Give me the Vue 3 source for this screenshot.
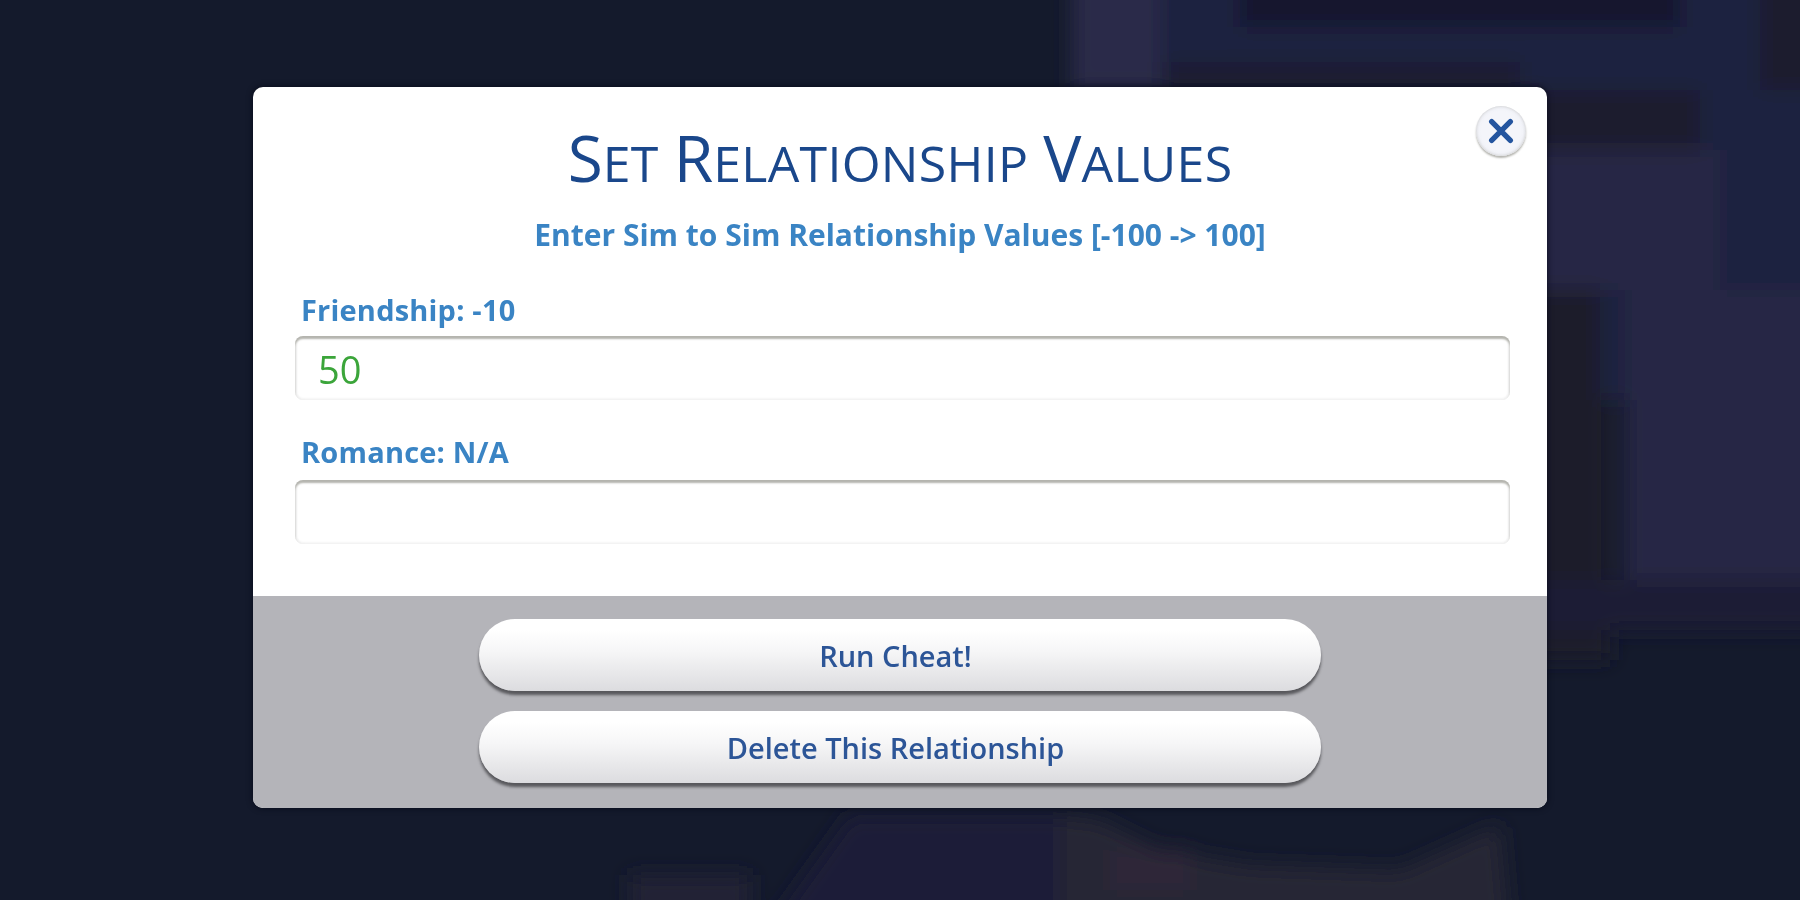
<script setup>
const titulo = [
  ["S", "ET"],
  ["R", "ELATIONSHIP"],
  ["V", "ALUES"],
];
const campos = [
  { rotulo: "Friendship: -10", valor: "50" },
  { rotulo: "Romance: N/A", valor: "" },
];
const botoes = ["Run Cheat!", "Delete This Relationship"];
</script>

<template>
  <div class="cena">
    <svg class="fundo" viewBox="0 0 1800 900" aria-hidden="true">
      <defs>
        <filter id="desfoque" x="-5%" y="-5%" width="110%" height="110%"><feGaussianBlur stdDeviation="10" /></filter>
      </defs>
      <g filter="url(#desfoque)">
        <rect x="1072" y="-40" width="88" height="130" fill="#2a2b48" />
        <rect x="1160" y="-40" width="680" height="130" fill="#1b2140" />
        <rect x="1240" y="-40" width="440" height="67" fill="#14142f" />
        <rect x="1165" y="62" width="355" height="30" fill="#1b1b30" />
        <rect x="1760" y="-40" width="80" height="130" fill="#1c1d2e" />
        <rect x="1530" y="90" width="190" height="60" fill="#1a1a2e" />
        <rect x="1700" y="90" width="140" height="240" fill="#1b2140" />
        <rect x="1530" y="150" width="190" height="140" fill="#272844" />
        <rect x="1530" y="290" width="80" height="370" fill="#1a1a2c" />
        <rect x="1600" y="290" width="30" height="110" fill="#1e2340" />
        <rect x="1625" y="290" width="215" height="290" fill="#272845" />
        <rect x="1530" y="580" width="310" height="50" fill="#1b1a36" />
        <path d="M850 940 L860 840 L900 815 L1060 815 L1100 820 L1160 850 L1250 865 L1400 870 L1500 825 L1510 940 Z" fill="#272534" />
        <path d="M760 940 L850 815 L1060 815 L1060 940 Z" fill="#1d1e38" />
        <rect x="1110" y="850" width="80" height="40" fill="#2f2538" />
        <rect x="630" y="875" width="120" height="50" fill="#232436" />
      </g>
    </svg>

    <section class="janela">
      <button class="fechar" type="button" aria-label="Fechar">
        <svg viewBox="0 0 24 24" width="32" height="32">
          <path d="M5 5 L19 19 M19 5 L5 19" />
        </svg>
      </button>

      <div class="corpo">
        <h1>
          <span class="palavra" v-for="p in titulo" :key="p[0]">{{ p[0] }}<small>{{ p[1] }}</small></span>
        </h1>
        <p class="subtitulo">Enter Sim to Sim Relationship Values [-100 -&gt; 100]</p>
        <div class="campo" v-for="c in campos" :key="c.rotulo">
          <label>{{ c.rotulo }}</label>
          <div class="entrada">{{ c.valor }}</div>
        </div>
      </div>

      <div class="rodape">
        <button class="botao" type="button" v-for="b in botoes" :key="b">{{ b }}</button>
      </div>
    </section>
  </div>
</template>

<style scoped>
.cena {
  position: relative;
  width: 1800px;
  height: 900px;
  padding: 87px 253px 0;
  box-sizing: border-box;
  background: #141a2c;
  overflow: hidden;
}

.fundo {
  position: absolute;
  inset: 0;
  width: 100%;
  height: 100%;
}

.janela {
  position: relative;
  height: 721px;
  border-radius: 10px;
  overflow: hidden;
  background: #fff;
  box-shadow: 0 0 6px rgba(5, 8, 20, 0.8);
  display: flex;
  flex-direction: column;
  font-family: "Open Sans", "Noto Sans", sans-serif;
  filter: blur(0.6px);
}

.fechar {
  position: absolute;
  top: 19px;
  right: 21px;
  width: 50px;
  height: 50px;
  padding: 0;
  border: none;
  border-radius: 50%;
  background: radial-gradient(circle, #f4f5fa 55%, #e6e8ef 100%);
  box-shadow: 0 2px 2px #b5b5b0, inset 0 0 3px #c4c4c4;
  display: flex;
  align-items: center;
  justify-content: center;
}

.fechar path {
  fill: none;
  stroke: #24559f;
  stroke-width: 4;
  stroke-linecap: round;
}

.corpo {
  height: 509px;
  padding: 0 37px 0 43px;
  box-sizing: border-box;
}

h1 {
  margin: 33px 0 0 -6px;
  font-size: 64px;
  line-height: 76px;
  font-weight: 500;
  text-align: center;
  color: #1a478b;
  display: flex;
  justify-content: center;
  gap: 15px;
}

h1 small {
  font-size: 50px;
  letter-spacing: 0.3px;
}

.subtitulo {
  margin: 17px 0 42px -6px;
  font-size: 30px;
  line-height: 34px;
  font-weight: 700;
  text-align: center;
  color: #3a84c4;
}

.campo {
  margin-left: -1px;
  margin-bottom: 36px;
}

.campo label {
  display: block;
  margin: 0 0 10px 6px;
  font-size: 29px;
  line-height: 32px;
  font-weight: 700;
  letter-spacing: 0.2px;
  color: #3a84c4;
}

.entrada {
  height: 64px;
  padding-left: 23px;
  border-radius: 8px;
  box-shadow: inset 0 3px 2px #b4b4ae, inset 2px 0 2px #efefef, inset -2px 0 2px #efefef, inset 0 -2px 2px #f6f6f6;
  font-size: 38px;
  font-weight: 500;
  line-height: 66px;
  color: #3ba53a;
}

.campo + .campo .entrada {
  margin-top: 12px;
}

.rodape {
  flex: 1;
  background: #b4b4b9;
  padding-top: 23px;
  display: flex;
  flex-direction: column;
  align-items: center;
  gap: 20px;
}

.botao {
  width: 842px;
  height: 72px;
  padding: 0 9px 0 0;
  border: none;
  border-radius: 36px;
  background: linear-gradient(#ffffff 15%, #f6f6f7 45%, #dcdcdf 100%);
  box-shadow: 0 4px 3px #58585c;
  font-family: inherit;
  font-size: 29px;
  font-weight: 600;
  color: #2c5597;
}
</style>

<style>
body {
  background: #141a2c;
}
</style>
